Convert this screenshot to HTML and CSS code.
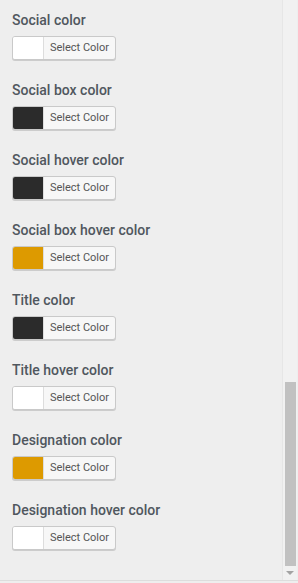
FILE: index.html
```html
<!DOCTYPE html>
<html lang="en">
<head>
    <meta charset="UTF-8">
    <meta name="viewport" content="width=device-width, initial-scale=1.0">
    <title>Team Colors</title>
    <link rel="stylesheet" href="styles.css">
</head>
<body>
    <div class="panel">
        <div class="options">
            <div class="option">
                <h4>Social color</h4>
                <button class="color-btn"><span class="swatch white"></span><span class="btn-text">Select Color</span></button>
            </div>
            <div class="option">
                <h4>Social box color</h4>
                <button class="color-btn"><span class="swatch dark"></span><span class="btn-text">Select Color</span></button>
            </div>
            <div class="option">
                <h4>Social hover color</h4>
                <button class="color-btn"><span class="swatch dark"></span><span class="btn-text">Select Color</span></button>
            </div>
            <div class="option">
                <h4>Social box hover color</h4>
                <button class="color-btn"><span class="swatch gold"></span><span class="btn-text">Select Color</span></button>
            </div>
            <div class="option">
                <h4>Title color</h4>
                <button class="color-btn"><span class="swatch dark"></span><span class="btn-text">Select Color</span></button>
            </div>
            <div class="option">
                <h4>Title hover color</h4>
                <button class="color-btn"><span class="swatch white"></span><span class="btn-text">Select Color</span></button>
            </div>
            <div class="option">
                <h4>Designation color</h4>
                <button class="color-btn"><span class="swatch gold"></span><span class="btn-text">Select Color</span></button>
            </div>
            <div class="option">
                <h4>Designation hover color</h4>
                <button class="color-btn"><span class="swatch white"></span><span class="btn-text">Select Color</span></button>
            </div>
        </div>

        <!-- scroll track on the right -->
        <div class="scrollbar">
            <div class="thumb"></div>
            <div class="arrow"></div>
        </div>
    </div>
    <div class="footer-line"></div>
</body>
</html>
```

FILE: styles.css
```css
body {
    margin: 0;
    background-color: #eeeeee;
    font-family: Roboto, "Liberation Sans", Arial, sans-serif;
    height: 583px;
    overflow: hidden;
}
.panel {
    display: flex;
    height: 580px;
}
.options {
    flex: 1;
    padding: 10px 0 0 12px;
}
.option {
    margin-bottom: 20px;
}
.option h4 {
    margin: 0 0 6px 0;
    font-size: 14px;
    line-height: 20px;
    font-weight: 500;
    color: #50575e;
}
.color-btn {
    display: flex;
    align-items: stretch;
    width: 104px;
    height: 24px;
    padding: 0;
    border: 1px solid #c9c9c9;
    border-radius: 3px;
    background: #f7f7f7;
    box-shadow: 0 1px 0 #cccccc;
    overflow: hidden;
    cursor: pointer;
    font-family: inherit;
}
.swatch {
    width: 30px;
    border-right: 1px solid #dddddd;
}
.swatch.white {
    background: #ffffff;
}
.swatch.dark {
    background: #2b2b2b;
}
.swatch.gold {
    background: #dd9a00;
}
.btn-text {
    flex: 1;
    font-size: 11px;
    line-height: 22px;
    color: #555555;
    text-align: center;
}
.scrollbar {
    width: 14px;
    margin-right: 1px;
    background: #f1f1f1;
    border-left: 1px solid #e6e6e6;
    position: relative;
}
.thumb {
    position: absolute;
    top: 382px;
    left: 2px;
    width: 11px;
    height: 184px;
    background: #c1c1c1;
}
.arrow {
    position: absolute;
    top: 571px;
    left: 3px;
    width: 0;
    height: 0;
    border-left: 4px solid transparent;
    border-right: 4px solid transparent;
    border-top: 4px solid #a3a3a3;
}
.footer-line {
    height: 1px;
    background: #dddddd;
}
```
